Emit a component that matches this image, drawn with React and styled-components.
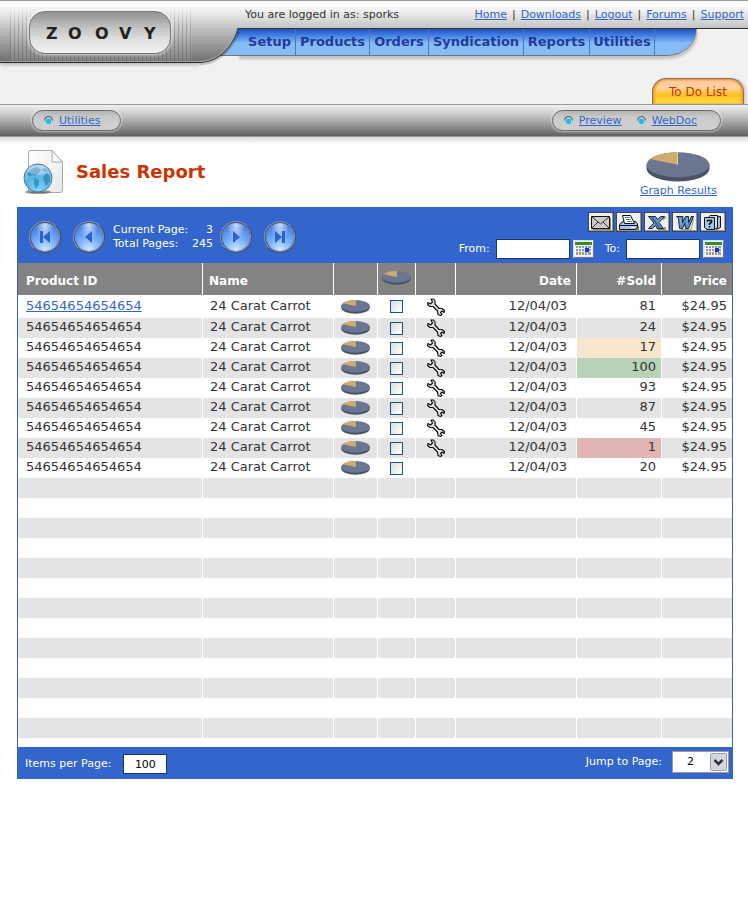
import React from "react";
import styled, { createGlobalStyle, css } from "styled-components";

const BLUE = "#3366cc";

const GlobalStyle = createGlobalStyle`
  *, *::before, *::after { box-sizing: border-box; }
  body {
    margin: 0;
    background: #fff;
    color: #333;
    font-family: "DejaVu Sans", Verdana, sans-serif;
    font-size: 11px;
    line-height: 14px;
  }
  button, input, select { font: inherit; }
`;

/* ---------- shared ---------- */

const Link = styled.a`
  color: ${BLUE};
  text-decoration: underline;
`;

const steel = "linear-gradient(#fff 0, #fff 3px, #e6e6e6 14px, #c0c0c0 28px, #6c6c6c 62px)";

/* ---------- header ---------- */

const Header = styled.header`
  background: #f1f1f1;
`;

const HeaderTop = styled.div`
  display: flex;
  height: 66px;
`;

const BrandPanel = styled.div`
  flex: none;
  width: 200px;
  height: 63px;
  padding: 10px 29px 0;
  border-top: 1px solid #9a9a9e;
  border-bottom: 1px solid #333;
  background: ${steel};
  box-shadow: inset 0 -1px 0 #999, 0 2px 3px rgba(0, 0, 0, 0.25);
  position: relative;

  &::before {
    content: "";
    position: absolute;
    inset: 4px 8px 1px 10px;
    background: repeating-linear-gradient(90deg, rgba(90, 90, 90, 0.3) 0, rgba(90, 90, 90, 0.3) 1px, rgba(255, 255, 255, 0.12) 1px, rgba(255, 255, 255, 0.12) 4px);
    mask-image: linear-gradient(transparent, #000 40%);
  }
`;

const LogoPlate = styled.div`
  position: relative;
  display: flex;
  height: 43px;
  border: 1px solid #777;
  border-radius: 16px;
  background: linear-gradient(#939393, #c4c4c4 40%, #e2e2e2 70%, #f2f2f2);
  box-shadow: 0 0 3px 1px rgba(255, 255, 255, 0.65);
`;

const LogoText = styled.svg`
  width: 100%;
  height: 100%;

  text {
    font: bold 16px "DejaVu Sans", sans-serif;
    fill: #222;
  }
`;

const Swoosh = styled.svg`
  flex: none;
  position: relative;
  width: 38px;
  height: 66px;
  overflow: visible;
`;

const HeaderMain = styled.div`
  flex: 1;
  min-width: 0;
`;

const AccountBar = styled.div`
  display: flex;
  justify-content: space-between;
  align-items: center;
  height: 29px;
  padding: 1px 4px 0 7px;
  border-top: 1px solid #9a9a9e;
  border-bottom: 1px solid #333;
  background: ${steel};
  white-space: nowrap;
`;

const AccountLinks = styled.div`
  display: flex;
  gap: 5px;
`;

const MainNav = styled.nav`
  display: grid;
  grid-template-columns: 58px 74px 59px 95px 66px 65px;
  width: 459px;
  height: 27px;
  border-bottom: 1px solid #777;
  border-right: 1px solid #888;
  border-bottom-right-radius: 30px 27px;
  background: linear-gradient(#1f50b8, #3d7be0 22%, #86bbf5 55%, #86bbf5);
  box-shadow: 1px 3px 3px rgba(0, 0, 0, 0.2);
`;

const NavLink = styled.a`
  display: flex;
  align-items: center;
  justify-content: ${(p) => (p.$first ? "flex-end" : "center")};
  padding: 0 ${(p) => (p.$first ? 4 : 0)}px 0 0;
  border-right: 1px solid #4678c4;
  color: #1f3a9c;
  font-size: 13px;
  font-weight: bold;
  text-decoration: none;
`;

const TabRow = styled.div`
  display: flex;
  justify-content: flex-end;
  padding: 12px 4px 0;
`;

const Tab = styled.a`
  display: flex;
  justify-content: center;
  align-items: center;
  width: 92px;
  height: 26px;
  border: 1px solid #777;
  border-bottom: 0;
  border-radius: 14px 14px 0 0;
  color: #cc3300;
  font-size: 12px;
  text-decoration: none;
  background: linear-gradient(#ffc9a0 0, #ffd2a0 35%, #ffc21c 65%, #f8dc58 100%);
  box-shadow: inset 0 1px 2px #ff8a1e, inset -2px 0 2px #ffa51e, inset 2px 0 2px #ffa51e, 2px 0 2px rgba(0, 0, 0, 0.15);
`;

const SubBar = styled.div`
  display: flex;
  justify-content: space-between;
  align-items: center;
  height: 33px;
  padding: 0 27px 0 32px;
  border-top: 1px solid #999;
  border-bottom: 1px solid #999;
  background: linear-gradient(#f1f1f1, #b5b5b5 45%, #606060);
`;

const BarShadow = styled.div`
  height: 7px;
  background: linear-gradient(#dadada, #fff);
`;

const Pill = styled.nav`
  display: flex;
  align-items: center;
  gap: 15px;
  height: 21px;
  padding: 0 ${(p) => (p.$wide ? 23 : 18)}px 0 11px;
  border: 1px solid #6a6a6a;
  border-radius: 11px;
  background: linear-gradient(#b4b4b4, #cbcbcb 35%, #cfcfcf);
  box-shadow: 0 0 2px 1px rgba(255, 255, 255, 0.5);
`;

const PillItem = styled.span`
  display: flex;
  align-items: center;
  gap: 6px;
  min-width: 58px;
`;

const Dot = styled.svg`
  flex: none;
  width: 9px;
  height: 9px;
`;

/* ---------- title ---------- */

const TitleRow = styled.div`
  display: flex;
  justify-content: space-between;
  align-items: flex-start;
  height: 63px;
  padding: 5px 27px 0 22px;
`;

const TitleGroup = styled.div`
  display: flex;
  align-items: center;
  gap: 12px;
`;

const Title = styled.h1`
  margin: 0;
  color: #cc3300;
  font-size: 18px;
  line-height: 22px;
`;

const GraphLink = styled(Link)`
  display: flex;
  flex-direction: column;
  align-items: flex-start;
  width: 81px;
  gap: 2px;
  padding-top: 3px;

  svg { margin-left: 6px; }
`;

/* ---------- report panel ---------- */

const Panel = styled.main`
  margin: 0 15px 0 17px;
  border: solid ${BLUE};
  border-width: 0 1px;
`;

const Toolbar = styled.div`
  display: flex;
  justify-content: space-between;
  height: 56px;
  padding: 5px 6px 0 11px;
  background: ${BLUE};
  color: #fff;
`;

const Pager = styled.div`
  display: flex;
  align-items: center;
  gap: 12px;
  padding-bottom: 2px;
`;

const PageInfo = styled.dl`
  width: 100px;
  margin: 0 -5px 0 -4px;

  div { display: flex; justify-content: space-between; }
  dt, dd { margin: 0; white-space: nowrap; }
`;

const RoundButton = styled.button`
  display: flex;
  align-items: center;
  justify-content: center;
  width: 32px;
  height: 32px;
  padding: 0;
  border: 2px ridge #8496b8;
  border-radius: 50%;
  background:
    radial-gradient(ellipse at 50% 8%, rgba(255, 255, 255, 0.7), transparent 45%),
    radial-gradient(circle at 50% 95%, #cfe8ff, #78b0fa 40%, #4f86e8 75%);
`;

const Tools = styled.div`
  display: flex;
  flex-direction: column;
  align-items: flex-end;
  gap: 7px;
`;

const ExportRow = styled.div`
  display: flex;
  gap: 2px;
`;

const ExportButton = styled.button`
  display: flex;
  align-items: center;
  justify-content: center;
  width: 26px;
  height: 20px;
  padding: 0;
  border: 1px solid #444;
  background: #efefef;
  box-shadow: inset -1px -1px 0 #999;
`;

const DateRow = styled.div`
  display: flex;
  align-items: center;
  gap: 3px;
  padding-right: 2px;
`;

const DateLabel = styled.label`
  display: flex;
  align-items: center;
  gap: 6px;
  margin-left: 8px;
`;

const TextInput = styled.input`
  width: ${(p) => p.$w}px;
  height: 20px;
  padding: 0;
  border: 1px solid #17386e;
  background: #fff;
  color: #000;
  text-align: center;
`;

const CalendarButton = styled.button`
  display: flex;
  width: 21px;
  height: 18px;
  padding: 1px;
  border: 1px solid #ddd;
  border-right-color: #777;
  border-bottom-color: #777;
  background: #eee;
`;

const Grid = styled.table`
  width: 100%;
  table-layout: fixed;
  border-collapse: separate;
  border-spacing: 0;
  font-size: 13px;
`;

const edge = css`
  border-right: 1px solid #fff;
  &:last-child { border-right: 0; }
`;

const Th = styled.th`
  ${edge}
  height: 32px;
  padding: ${(p) => (p.$align === "center" ? "0 1px" : p.$align ? "3px 5px 0 0" : p.$pad ? `3px 0 0 ${p.$pad}px` : "0")};
  background: #838383;
  color: #fff;
  font-size: 12px;
  text-align: ${(p) => p.$align || "left"};
`;

const Row = styled.tr`
  height: ${(p) => p.$h || 20}px;
  background: ${(p) => (p.$alt ? "#e4e4e4" : "#fff")};
`;

const marks = { warm: "#f7e5cc", good: "#b8d2b8", bad: "#e2b5b5" };

const Td = styled.td`
  ${edge}
  padding: ${(p) => (p.$align === "right" ? "0 5px 2px 0" : "0 0 2px 8px")};
  text-align: ${(p) => p.$align || "left"};
  white-space: nowrap;
  background: ${(p) => marks[p.$mark] || "transparent"};
  ${(p) => p.$wideEnd && "padding-right: 9px;"}
  ${(p) => p.$short && "padding-left: 7px;"}
`;

const IconTd = styled.td`
  ${edge}
  padding: 0;
`;

const IconBox = styled.div`
  display: flex;
  align-items: center;
  justify-content: center;
  height: 18px;
`;

const Check = styled.input`
  appearance: none;
  width: 13px;
  height: 13px;
  margin: 0;
  border: 1px solid #1c5180;
  background: linear-gradient(135deg, #dcdcd7, #fff);

  &:checked { box-shadow: inset 0 0 0 3px #fff; background: #21a121; }
`;

const Footer = styled.div`
  display: flex;
  justify-content: space-between;
  align-items: center;
  height: 32px;
  padding: 0 3px 0 7px;
  background: ${BLUE};
  color: #fff;
`;

const FooterLabel = styled.label`
  display: flex;
  align-items: center;
  gap: ${(p) => p.$gap}px;
  padding: ${(p) => (p.$raised ? "0 0 2px" : "2px 0 0")};
`;

const SelectBox = styled.span`
  position: relative;
  display: flex;
`;

const Select = styled.select`
  appearance: none;
  width: 57px;
  height: 22px;
  padding: 0 22px 0 14px;
  border: 1px solid #999;
  border-radius: 0;
  background: #fff;
  color: #000;
`;

const SelectArrow = styled.svg`
  position: absolute;
  right: 2px;
  top: 2px;
  pointer-events: none;
`;

/* ---------- drawings ---------- */

const Pie = ({ w, h }) => (
  <svg width={w} height={h} viewBox="0 0 64 30" preserveAspectRatio="none" aria-hidden="true">
    <path d="M0.500 12.500V16.500A31.500 13 0 0 0 63.500 16.500V12.500Z" fill="#4a5365" />
    <ellipse cx="32" cy="12.700" rx="31.500" ry="12.500" fill="#6b7690" />
    <path d="M32 12.700L4 7A31.500 12.500 0 0 1 32 0.200Z" fill="#d3aa6e" />
    <path d="M31.500 0.500V12.500" stroke="#d8d88c" strokeWidth="1" />
  </svg>
);

const Wrench = () => (
  <svg width="18" height="18" viewBox="0 0 18 18" aria-hidden="true">
    <path
      d="M4 1L6.500 1L8 3L8 6L12 10.500L15 10.500L17.500 12.500L17 14.500L15 13L13.500 14.500L15 16.500L13.500 17.500L11 16.500L10.500 13L6 8.500L3 8.500L.500 6.500L1 4.500L3.500 6L5.500 4Z"
      fill="#e4e4e4"
      stroke="#111"
      strokeWidth="1.200"
      strokeLinejoin="round"
    />
  </svg>
);

const PageGlobe = () => (
  <svg width="42" height="46" viewBox="0 0 42 46" aria-hidden="true">
    <defs>
      <linearGradient id="sheet" x1="0" y1="0" x2="1" y2="1">
        <stop offset="0" stopColor="#fff" />
        <stop offset="1" stopColor="#e8e8e8" />
      </linearGradient>
      <radialGradient id="globe" cx="0.500" cy="0.950" r="0.950">
        <stop offset="0" stopColor="#7fdcff" />
        <stop offset="0.500" stopColor="#5cb2e4" />
        <stop offset="1" stopColor="#a4cbe6" />
      </radialGradient>
    </defs>
    <path d="M8 1.500H30L40.500 13V41Q40.500 43.500 38 43.500H9Q6.500 43.500 6.500 41V3Q6.500 1.500 8 1.500Z" fill="url(#sheet)" stroke="#aaa" />
    <path d="M30 1.500V13H40.500Z" fill="#fafafa" stroke="#aaa" strokeLinejoin="round" />
    <ellipse cx="16" cy="43" rx="13" ry="2" fill="#555" opacity=".6" />
    <circle cx="16" cy="29" r="14" fill="url(#globe)" stroke="#4a7896" />
    <path d="M5 25L9 20L15 18L19 21L16 25L13 27L10 26L8 28ZM12 29L17 31L17 36L14 40L12 35ZM21 28L25 24L28 27L28 32L24 37L22 32ZM20 20L24 19L26 22L22 23Z" fill="#1c79ad" opacity=".6" />
    <ellipse cx="16" cy="21" rx="10" ry="5" fill="#fff" opacity=".3" />
  </svg>
);

const arrows = {
  first: "M4 3H7V15H4ZM14 3V15L7 9Z",
  prev: "M12 3V15L5 9Z",
  next: "M6 3V15L13 9Z",
  last: "M4 3V15L11 9ZM11 3H14V15H11Z",
};

const PageButton = ({ kind, label }) => (
  <RoundButton type="button" aria-label={label}>
    <svg width="18" height="18" viewBox="0 0 18 18" aria-hidden="true">
      <path d={arrows[kind]} fill="#2b62cc" />
    </svg>
  </RoundButton>
);

const exportIcons = {
  Email: (
    <>
      <path d="M3 4H21V16H3Z" fill="#888" />
      <path d="M1.500 2.500H19.500V14.500H1.500Z" fill="#ccc" stroke="#111" />
      <path d="M2 3L10.500 10L19 3M2 14L8 8M19 14L13 8" stroke="#333" />
    </>
  ),
  Print: (
    <>
      <path d="M4 12H21V16H4Z" fill="#777" />
      <path d="M1.500 10.500L5 7.500H17L19.500 9.500V13.500L17 15.500H1.500Z" fill="#9ec6ee" stroke="#111" />
      <path d="M6.500 9.500L4.500 1.500H12.500L16.500 9.500Z" fill="#fff" stroke="#111" />
      <path d="M7 3.500H12M8 5.500H13M9 7.500H14" stroke="#5480b0" />
      <path d="M2 11.500H19" stroke="#111" />
      <path d="M13 13.500H17" stroke="#fff" />
    </>
  ),
  Excel: (
    <>
      <path d="M12 15.500H19V13M17 5.500L20 3" stroke="#888" strokeWidth="1.500" />
      <path d="M2.500 2.500H9.500L11.500 5.500L14.500 2.500H18.500L13 8.500L17.500 14.500H11L9.500 11.500L6.500 14.500H2.500L8 9Z" fill="#6b96c4" stroke="#1a2a40" />
      <path d="M6 3.500L13.500 13.500" stroke="#345f96" strokeWidth="1.500" />
    </>
  ),
  Word: (
    <>
      <path d="M7 15.500H17L19.500 5" stroke="#999" />
      <path d="M2.500 2.500H9L8.500 8.500L11.500 2.500H14.500V8.500L17 3.500V2.500H19.500L14.500 14.500H11.500L11 9.500L8.500 14.500H5.500L4.500 4.500Z" fill="#5e8abc" stroke="#1a2a40" />
      <path d="M6 4L7 11M13 4V11" stroke="#8fb8e4" />
    </>
  ),
  Help: (
    <>
      <path d="M12.500 3.500L18.500 2.500V13.500L14 15.500" fill="#9ec6ee" stroke="#111" />
      <path d="M6.500 3.500L8 1.500H15.500V13.500L12 15.500" fill="#d2e6f8" stroke="#111" />
      <path d="M2.500 3.500H12.500V15.500H5L2.500 13.500Z" fill="#9ec6ee" stroke="#111" />
      <path d="M5.500 7.500V6.500H9.500V8.500L7.500 9.500V11M7.500 12V13.500" stroke="#111" strokeWidth="1.500" />
    </>
  ),
};

const Calendar = () => (
  <svg width="17" height="14" viewBox="0 0 17 14" shapeRendering="crispEdges" aria-hidden="true">
    <path d="M0 0H17V14H0Z" fill="#fff" />
    <path d="M0 0H17V3H0Z" fill="#289428" />
    <path d="M1 4H16V13H1Z" fill="#999" />
    <path d="M1 6.500H16M1 9.500H16M3.500 4V13M6.500 4V13M9.500 4V13M12.500 4V13" stroke="#eee" />
    <path d="M10 6H14V10H10Z" fill="#1a2cff" />
  </svg>
);

/* ---------- data ---------- */

const rows = [
  [81], [24], [17, "warm"], [100, "good"], [93], [87], [45], [1, "bad"], [20],
].map(([sold, mark], i) => ({
  id: "54654654654654", name: "24 Carat Carrot", date: "12/04/03", price: "$24.95",
  sold, mark, linked: i === 0, editable: i < 8,
}));

const columns = [185, 131, 44, 38, 40, 121, 85, 70];
const blankRows = 14;
const account = ["Home", "Downloads", "Logout", "Forums", "Support"];
const sections = ["Setup", "Products", "Orders", "Syndication", "Reports", "Utilities"];

const PillLink = ({ children }) => (
  <PillItem>
    <Dot viewBox="0 0 9 9" aria-hidden="true">
      <circle cx="4.500" cy="4.500" r="4" fill="#c4dde6" />
      <circle cx="4.500" cy="5.300" r="2.800" fill="#22b8f0" />
      <path d="M0.500 4.500A4 4 0 0 1 8.500 4.500" fill="none" stroke="#444" />
    </Dot>
    <Link href="#">{children}</Link>
  </PillItem>
);

const DateField = ({ label }) => (
  <>
    <DateLabel>
      {label}
      <TextInput $w={74} type="text" />
    </DateLabel>
    <CalendarButton type="button" aria-label={`${label} pick a date`}>
      <Calendar />
    </CalendarButton>
  </>
);

export default function App() {
  return (
    <>
      <GlobalStyle />
      <Header>
        <HeaderTop>
          <BrandPanel>
            <LogoPlate>
              <LogoText viewBox="0 0 140 41" aria-label="Zoovy">
                <text x="16 38 65 89 114" y="27">ZOOVY</text>
              </LogoText>
            </LogoPlate>
          </BrandPanel>
          <Swoosh viewBox="0 0 38 66" aria-hidden="true">
            <defs>
              <linearGradient id="steel" gradientUnits="userSpaceOnUse" x1="0" y1="1" x2="0" y2="63">
                <stop offset="0.048" stopColor="#fff" />
                <stop offset="0.226" stopColor="#e6e6e6" />
                <stop offset="0.452" stopColor="#c0c0c0" />
                <stop offset="1" stopColor="#6c6c6c" />
              </linearGradient>
              <linearGradient id="sky" gradientUnits="userSpaceOnUse" x1="0" y1="29" x2="0" y2="55">
                <stop offset="0" stopColor="#1f50b8" />
                <stop offset="0.220" stopColor="#3d7be0" />
                <stop offset="0.550" stopColor="#86bbf5" />
              </linearGradient>
            </defs>
            <path d="M16 29H38V55H16Z" fill="url(#sky)" />
            <path d="M18 55.500H38" stroke="#777" />
            <path d="M0 64Q24 63 39 32" fill="none" stroke="#000" strokeWidth="3" opacity=".18" />
            <path d="M0 0H38V28C35 42 22 62 0 62.500Z" fill="url(#steel)" />
            <path d="M38 28C35 42 22 62 0 62.500" fill="none" stroke="#333" />
            <path d="M36.500 29C33 42 20 61 0 61.500" fill="none" stroke="#aaa" />
            <path d="M0 0.500H38" stroke="#9a9a9e" />
          </Swoosh>
          <HeaderMain>
            <AccountBar>
              <span>You are logged in as: sporks</span>
              <AccountLinks>
                {account.map((name, i) => (
                  <React.Fragment key={name}>
                    {i > 0 && <span>|</span>}
                    <Link href="#">{name}</Link>
                  </React.Fragment>
                ))}
              </AccountLinks>
            </AccountBar>
            <MainNav>
              {sections.map((name, i) => (
                <NavLink key={name} href="#" $first={i === 0}>{name}</NavLink>
              ))}
            </MainNav>
          </HeaderMain>
        </HeaderTop>
        <TabRow>
          <Tab href="#">To Do List</Tab>
        </TabRow>
      </Header>
      <SubBar>
        <Pill>
          <PillLink>Utilities</PillLink>
        </Pill>
        <Pill $wide>
          <PillLink>Preview</PillLink>
          <PillLink>WebDoc</PillLink>
        </Pill>
      </SubBar>
      <BarShadow />

      <TitleRow>
        <TitleGroup>
          <PageGlobe />
          <Title>Sales Report</Title>
        </TitleGroup>
        <GraphLink href="#">
          <Pie w={64} h={30} />
          Graph Results
        </GraphLink>
      </TitleRow>

      <Panel>
        <Toolbar>
          <Pager>
            <PageButton kind="first" label="First page" />
            <PageButton kind="prev" label="Previous page" />
            <PageInfo>
              <div><dt>Current Page:</dt><dd>3</dd></div>
              <div><dt>Total Pages:</dt><dd>245</dd></div>
            </PageInfo>
            <PageButton kind="next" label="Next page" />
            <PageButton kind="last" label="Last page" />
          </Pager>
          <Tools>
            <ExportRow>
              {Object.entries(exportIcons).map(([name, icon]) => (
                <ExportButton key={name} type="button" aria-label={name}>
                  <svg width="22" height="17" viewBox="0 0 22 17" fill="none" aria-hidden="true">{icon}</svg>
                </ExportButton>
              ))}
            </ExportRow>
            <DateRow>
              <DateField label="From:" />
              <DateField label="To:" />
            </DateRow>
          </Tools>
        </Toolbar>

        <Grid>
          <colgroup>
            {columns.map((w, i) => <col key={i} width={w} />)}
          </colgroup>
          <thead>
            <tr>
              <Th $pad={8}>Product ID</Th>
              <Th $pad={6}>Name</Th>
              <Th />
              <Th $align="center"><Pie w={29} h={14} /></Th>
              <Th />
              <Th $align="right">Date</Th>
              <Th $align="right">#Sold</Th>
              <Th $align="right">Price</Th>
            </tr>
          </thead>
          <tbody>
            {rows.map((r, i) => (
              <Row key={i} $alt={i % 2 === 1} $h={i === 0 ? 23 : 20}>
                <Td>{r.linked ? <Link href="#">{r.id}</Link> : r.id}</Td>
                <Td $short>{r.name}</Td>
                <IconTd><IconBox><Pie w={29} h={14} /></IconBox></IconTd>
                <IconTd><IconBox><Check type="checkbox" aria-label={`Graph row ${i + 1}`} /></IconBox></IconTd>
                <IconTd>{r.editable && <IconBox><Wrench /></IconBox>}</IconTd>
                <Td $align="right" $wideEnd>{r.date}</Td>
                <Td $align="right" $mark={r.mark}>{r.sold}</Td>
                <Td $align="right">{r.price}</Td>
              </Row>
            ))}
            {Array.from({ length: blankRows }, (_, i) => (
              <Row key={i} $alt={i % 2 === 0} $h={i === blankRows - 1 ? 9 : 20}>
                {columns.map((_, c) => <IconTd key={c} />)}
              </Row>
            ))}
          </tbody>
        </Grid>

        <Footer>
          <FooterLabel $gap={12}>
            Items per Page:
            <TextInput $w={44} type="text" defaultValue="100" />
          </FooterLabel>
          <FooterLabel $gap={10} $raised>
            Jump to Page:
            <SelectBox>
              <Select defaultValue="2">
                <option>1</option>
                <option>2</option>
                <option>3</option>
              </Select>
              <SelectArrow width="17" height="18" viewBox="0 0 17 18" aria-hidden="true">
                <rect x="0.500" y="0.500" width="16" height="17" rx="1" fill="#d4d6de" stroke="#9a9db0" />
                <path d="M4.500 7L8.500 11L12.500 7" fill="none" stroke="#333" strokeWidth="2.500" />
              </SelectArrow>
            </SelectBox>
          </FooterLabel>
        </Footer>
      </Panel>
    </>
  );
}
